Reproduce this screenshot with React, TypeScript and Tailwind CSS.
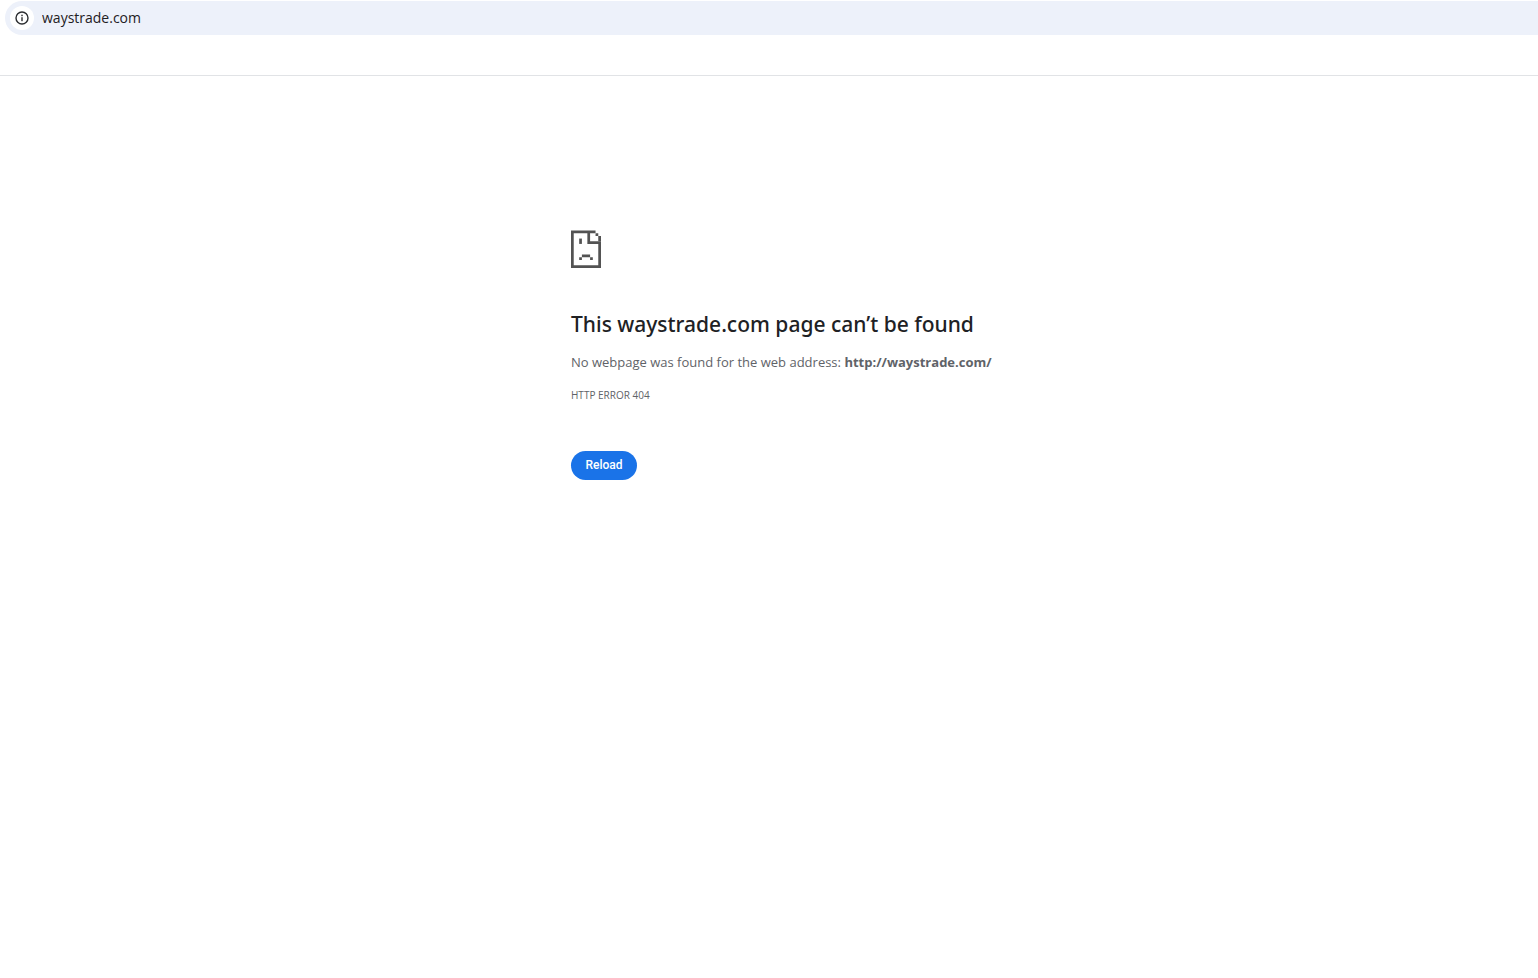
const host = 'waystrade.com'

function InfoIcon() {
  return (
    <svg viewBox="0 0 14 14" className="w-3.5 h-3.5" fill="none" aria-hidden="true">
      <circle cx="7" cy="7" r="6" stroke="#2b2d30" strokeWidth="1.4" />
      <rect x="6.3" y="6.2" width="1.4" height="4" fill="#2b2d30" />
      <rect x="6.3" y="3.7" width="1.4" height="1.5" fill="#2b2d30" />
    </svg>
  )
}

// Drawn on an 11x14 grid, one unit per block
function SadPageIcon() {
  return (
    <svg
      viewBox="0 -0.2 11 14.2"
      preserveAspectRatio="none"
      className="w-[30px] h-[38px]"
      fill="#535353"
      aria-hidden="true"
    >
      <path d="M0 0H9V1H7V4H11V5H6V1H1V13H10V5H11V14H0Z" />
      <path d="M9 1H10V2H9ZM10 2H11V4H10Z" />
      <path d="M3 3H4V5H3Z" />
      <path d="M4 9H7V10H4ZM3 10H4V11H3ZM7 10H8V11H7Z" />
    </svg>
  )
}

export default function App() {
  return (
    <div className="min-h-screen bg-white font-['Open_Sans','Noto_Sans',sans-serif]">
      {/* Address bar */}
      <header className="h-[76px] pt-px pl-[5px] border-b border-[#e1e3e6]">
        <div className="flex items-center gap-2 h-[34px] pl-[5px] rounded-l-full bg-[#edf1fa]">
          <button
            type="button"
            aria-label="View site information"
            className="flex items-center justify-center w-6 h-6 rounded-full bg-white"
          >
            <InfoIcon />
          </button>
          <input
            type="text"
            aria-label="Address"
            defaultValue={host}
            className="flex-1 min-w-0 bg-transparent text-sm text-[#1f2023] outline-none"
          />
        </div>
      </header>

      {/* Error message */}
      <main className="mx-auto w-full max-w-[480px] pl-[42px] pt-[154px]">
        <SadPageIcon />
        <h1 className="mt-10 font-['Noto_Sans','Open_Sans',sans-serif] text-[21px] leading-8 font-medium text-[#202124] whitespace-nowrap">
          This {host} page can’t be found
        </h1>
        <p className="mt-3 text-[13px] leading-5 text-[#5f6368] whitespace-nowrap">
          No webpage was found for the web address: <strong className="font-bold">http://{host}/</strong>
        </p>
        <p className="mt-[13px] text-[10px] leading-5 text-[#5f6368]">HTTP ERROR 404</p>
        <button
          type="button"
          className="mt-[46px] h-[29px] w-[66px] pb-px rounded-full bg-[#1a73e8] font-['Roboto',Arial,sans-serif] text-xs font-medium text-white"
        >
          Reload
        </button>
      </main>
    </div>
  )
}
